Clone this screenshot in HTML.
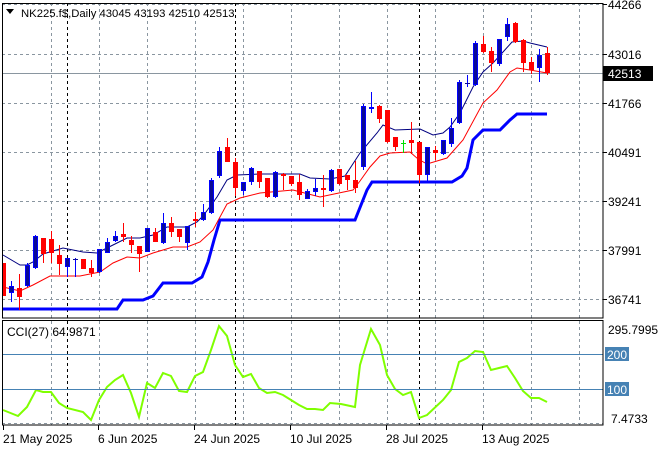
<!DOCTYPE html>
<html><head><meta charset="utf-8"><style>
html,body{margin:0;padding:0;background:#fff;}
body{width:660px;height:450px;overflow:hidden;font-family:"Liberation Sans",sans-serif;}
svg{display:block}
text{font-family:"Liberation Sans",sans-serif;font-size:12px;fill:#000}
</style></head><body>
<svg id="s" width="660" height="450" xmlns="http://www.w3.org/2000/svg">
<rect width="660" height="450" fill="#fff"/>
<g id="grid" stroke="#8a96a0" stroke-dasharray="3,3" stroke-width="1"></g>
<g stroke="#000" stroke-dasharray="3,3" stroke-width="1">
<line x1="67.5" y1="3" x2="67.5" y2="318"/><line x1="235.5" y1="3" x2="235.5" y2="318"/><line x1="419.5" y1="3" x2="419.5" y2="318"/>
<line x1="67.5" y1="321" x2="67.5" y2="425"/><line x1="235.5" y1="321" x2="235.5" y2="425"/><line x1="419.5" y1="321" x2="419.5" y2="425"/>
</g>
<line x1="2" y1="73.5" x2="603" y2="73.5" stroke="#8a96a0"/>
<polyline fill="none" stroke="#0000ff" stroke-width="3" points="3,309 117,309 123,300 143,300 153,296 163,283 192,283 202,277 208,262 214,240 220,220 355,220 361,205 367,190 372,182 452,182 462,176 467,168 473,140 483,130 500,130 510,120 517,114 547,114"/>
<polyline fill="none" stroke="#ff0000" stroke-width="1" points="3,287 20,291 33,285 50,276 80,276 90,274 100,272 113,263 127,257 140,258 153,253 173,247 187,247 200,242 213,230 227,204 240,198 260,193 293,190 320,197 353,190 360,181 370,167 380,156 390,153 410,152 418,159 427,164 447,158 463,140 483,103 497,90 510,72 517,68 530,70 547,73"/>
<polyline fill="none" stroke="#000080" stroke-width="1" points="3,255 20,265 27,265 33,262 43,254 63,248 83,252 97,253 113,245 127,238 140,238 153,235 167,227 187,227 197,222 203,216 217,197 227,180 237,175 260,174 300,174 310,178 330,179 345,176 360,153 377,133 383,125 395,130 420,129 433,135 443,133 450,127 460,113 473,87 483,72 493,63 503,52 512,42 523,41 530,43 547,47"/>
<g id="candles"></g>
<polyline fill="none" stroke="#7fff00" stroke-width="2" points="3,410 18,416 27,407 36,390 43,392 51,392 59,403 67,408 83,412 91,420 99,400 107,387 115,380 123,375 131,393 139,417 147,383 155,388 163,373 171,376 179,391 187,392 195,376 203,372 211,350 219,326 227,336 235,365 243,377 251,374 259,388 267,393 275,392 283,395 291,400 299,405 307,409 315,409 323,410 330,403 341,404 355,407 360,365 371,329 380,345 387,375 395,389 403,395 411,392 419,418 427,415 443,400 451,390 459,362 467,358 475,351 483,352 491,370 499,368 507,366 515,378 523,391 531,398 539,398 547,402"/>
<line x1="2" y1="354.5" x2="603" y2="354.5" stroke="#4682b4"/>
<line x1="2" y1="389.5" x2="603" y2="389.5" stroke="#4682b4"/>
<rect x="2.5" y="3.5" width="600.5" height="314.5" fill="none" stroke="#000"/>
<rect x="2.5" y="320.5" width="600.5" height="104.5" fill="none" stroke="#000"/>
<g id="labels"></g>
<path d="M6 9 L14 9 L10 14 Z" fill="#000"/>
<text x="21" y="17" style="font-size:11.3px">NK225.f$,Daily  43045 43193 42510 42513</text>
<text x="7" y="336">CCI(27) 64.9871</text>
<rect x="603" y="66" width="50" height="15" fill="#000"/>
<text x="608" y="78" style="fill:#fff">42513</text>
<text x="608" y="334">295.7995</text>
<rect x="605" y="347" width="24" height="14" fill="#4682b4"/>
<text x="607" y="359" style="fill:#fff">200</text>
<rect x="605" y="382" width="24" height="14" fill="#4682b4"/>
<text x="607" y="394" style="fill:#fff">100</text>
<text x="611" y="423">7.4733</text>
</svg>
<script>
var ns="http://www.w3.org/2000/svg",s=document.getElementById('s');
function el(p,t,a){var e=document.createElementNS(ns,t);for(var k in a)e.setAttribute(k,a[k]);p.appendChild(e);return e;}
var g=document.getElementById('grid');
[4,54,103,152,201,250,299].forEach(function(y){el(g,'line',{x1:2,y1:y+.5,x2:603,y2:y+.5});});
el(g,'line',{x1:2,y1:423.5,x2:603,y2:423.5});
[51,99,147,195,243,291,339,387,435,483,531,579].forEach(function(x){el(g,'line',{x1:x+.5,y1:3,x2:x+.5,y2:318});el(g,'line',{x1:x+.5,y1:321,x2:x+.5,y2:425});});
var L=document.getElementById('labels');
[[4,'44266'],[54,'43016'],[103,'41766'],[152,'40491'],[201,'39241'],[250,'37991'],[299,'36741']].forEach(function(p){el(L,'line',{x1:603,y1:p[0]+.5,x2:607,y2:p[0]+.5,stroke:'#000'});var t=el(L,'text',{x:608,y:p[0]+5});t.textContent=p[1];});
[[3,'21 May 2025'],[98,'6 Jun 2025'],[194,'24 Jun 2025'],[290,'10 Jul 2025'],[386,'28 Jul 2025'],[482,'13 Aug 2025']].forEach(function(p){el(L,'line',{x1:p[0]+.5,y1:425,x2:p[0]+.5,y2:430,stroke:'#000'});var t=el(L,'text',{x:p[0],y:443});t.textContent=p[1];});
var d=[[3,263,296,263,296,'r'],[11,286,293,281,302,'b'],[19,288,297,274,310,'r'],[27,265,286,263,287,'b'],[35,236,268,235,269,'b'],[43,238,254,238,263,'r'],[51,239,253,231,263,'r'],[59,255,264,245,275,'r'],[67,258,267,258,277,'b'],[75,259,260,258,277,'b'],[83,259,269,259,269,'r'],[91,268,273,260,277,'r'],[99,249,272,249,273,'b'],[107,242,253,238,253,'b'],[115,236,241,231,242,'b'],[123,234,237,223,242,'r'],[131,240,245,236,253,'r'],[139,246,254,246,272,'r'],[147,228,252,228,252,'b'],[155,232,242,228,242,'r'],[163,223,243,213,244,'b'],[171,223,232,217,237,'r'],[179,229,237,229,242,'r'],[187,226,243,226,250,'b'],[195,219,221,212,227,'r'],[203,212,220,204,221,'b'],[211,180,213,178,214,'b'],[219,151,176,147,178,'b'],[227,147,162,138,162,'r'],[235,162,188,158,196,'r'],[243,182,191,182,195,'b'],[251,168,182,167,185,'b'],[259,171,182,171,188,'r'],[267,178,197,178,198,'r'],[275,172,197,171,198,'b'],[283,174,176,173,190,'r'],[291,176,184,176,186,'r'],[299,182,195,174,200,'r'],[307,191,199,189,199,'b'],[315,188,192,179,196,'b'],[323,188,190,175,207,'r'],[331,170,191,169,192,'b'],[339,169,184,169,185,'r'],[347,175,180,175,190,'r'],[355,180,188,161,193,'r'],[363,106,167,104,170,'b'],[371,107,109,92,113,'b'],[379,106,119,105,123,'r'],[387,110,142,110,143,'r'],[395,137,147,137,151,'r'],[403,143,144,140,153,'g'],[411,140,143,122,154,'r'],[419,142,175,142,183,'r'],[427,147,175,147,181,'b'],[435,150,153,146,160,'r'],[443,140,154,140,155,'b'],[451,128,144,118,147,'b'],[459,82,123,80,124,'b'],[467,83,84,75,87,'b'],[475,43,85,41,86,'b'],[483,44,52,36,53,'r'],[491,51,63,47,72,'r'],[499,39,64,39,66,'b'],[507,24,37,18,41,'b'],[515,23,42,22,43,'r'],[523,40,63,39,72,'r'],[531,62,70,57,74,'r'],[539,55,68,49,82,'b'],[547,53,73,47,75,'r']];
var C=document.getElementById('candles');
d.forEach(function(c){var col=c[5]=='r'?'#ff0000':c[5]=='g'?'#00e000':'#0000ff',fill=c[5]=='b'?'#0a0a96':col;
el(C,'line',{x1:c[0]+.5,y1:c[3],x2:c[0]+.5,y2:c[4],stroke:col});
var x0=Math.max(c[0]-2,3);el(C,'rect',{x:x0,y:c[1],width:c[0]+3-x0,height:Math.max(c[2]-c[1],1),fill:fill,stroke:'none'});
if(c[5]=='b'){el(C,'rect',{x:x0+.5,y:c[1]+.5,width:c[0]+2-x0,height:Math.max(c[2]-c[1]-1,0),fill:'none',stroke:'#0000ff','stroke-width':1});}
});
</script>
</body></html>
